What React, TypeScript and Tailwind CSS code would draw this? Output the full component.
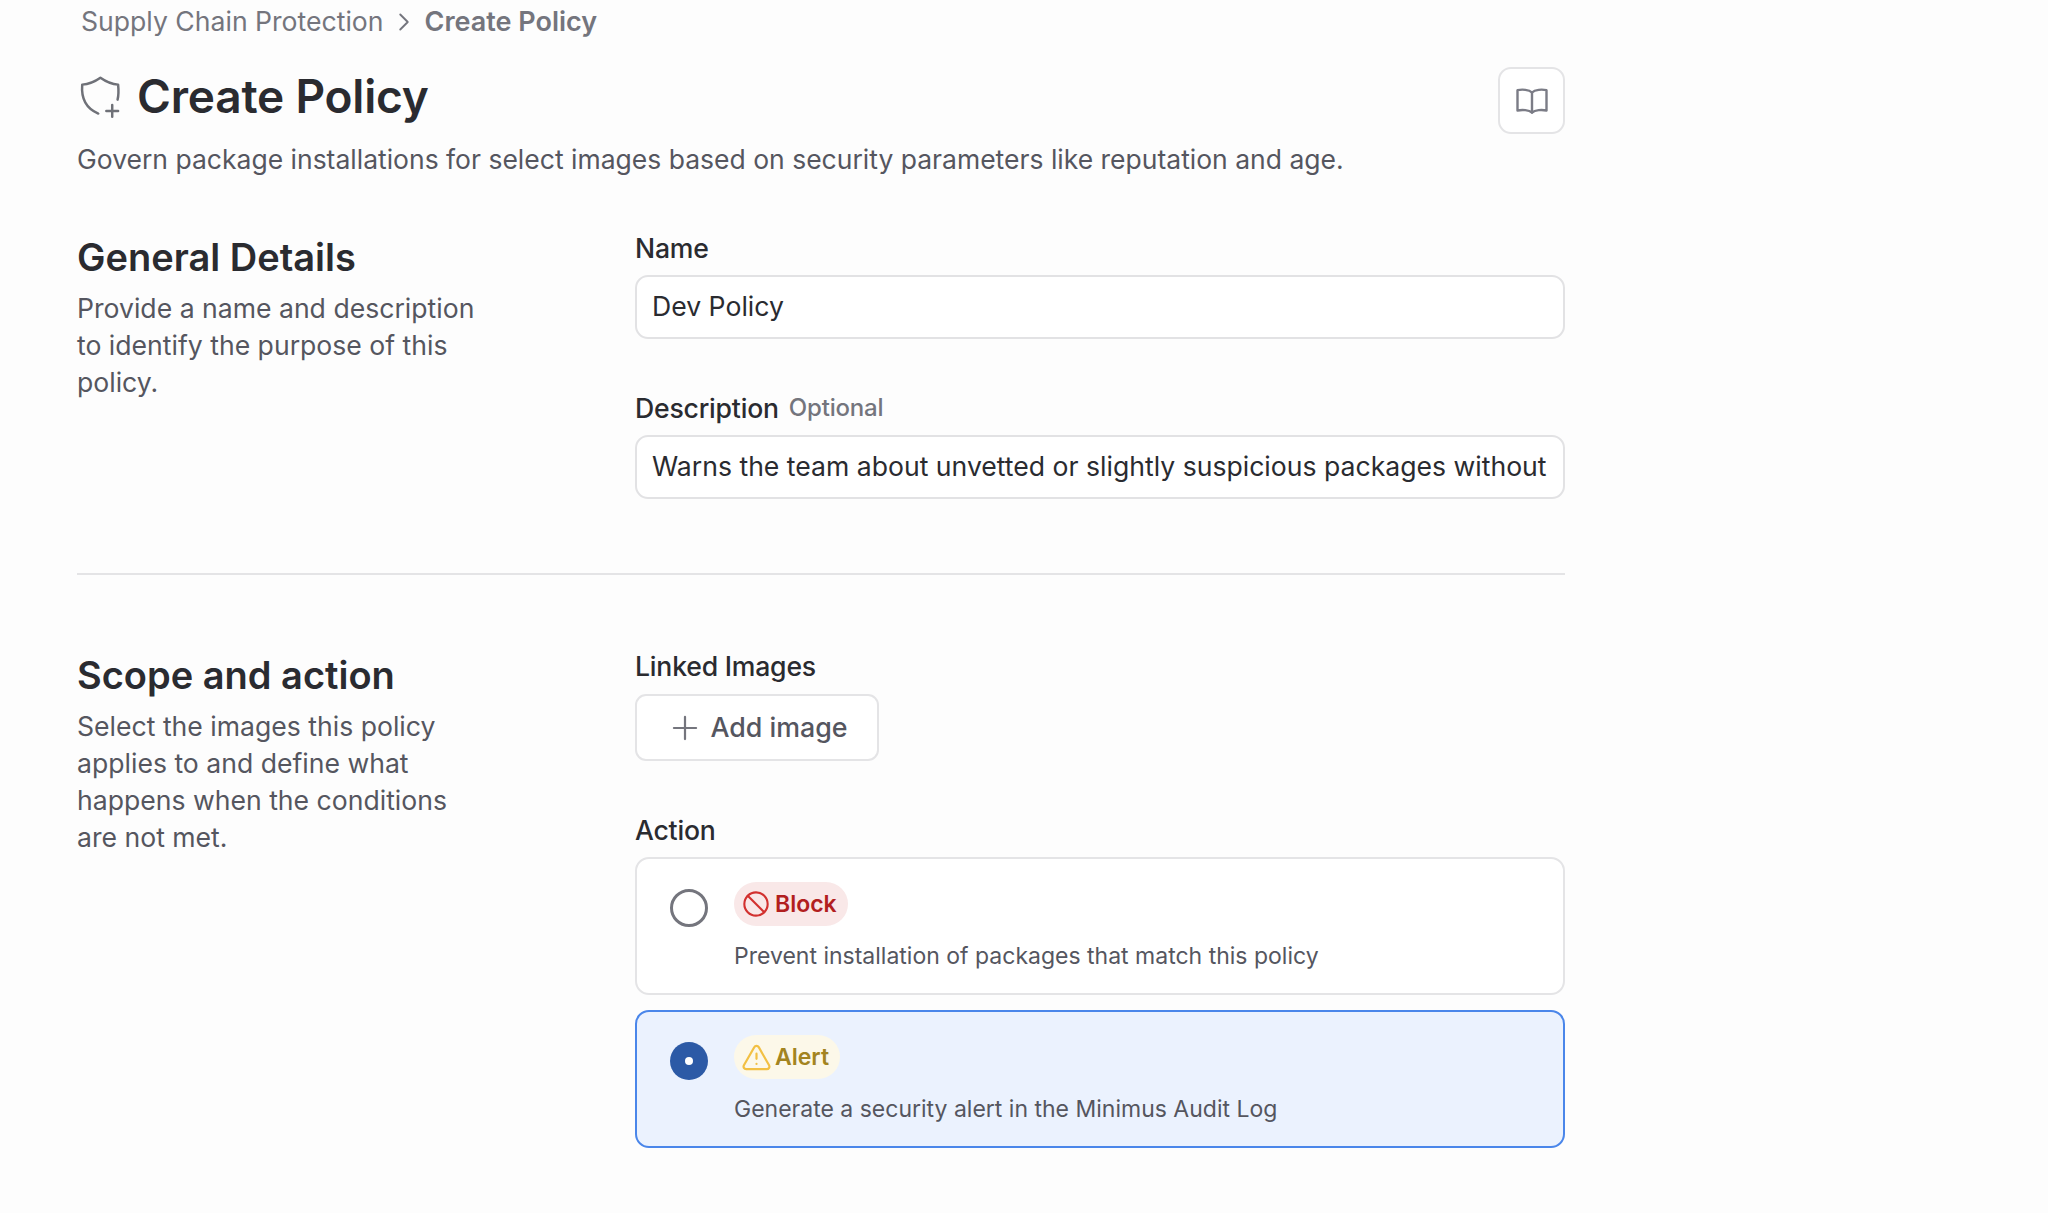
import React from "react";
import { Ban, ChevronRight, Plus, TriangleAlert } from "lucide-react";

const font = "font-['Inter','Liberation_Sans',sans-serif]";

function ShieldPlus() {
  return (
    <svg className="mt-[3px]" width="45" height="43" viewBox="0 0 42 40" fill="none" stroke="#6f7178" strokeWidth="2.3" strokeLinecap="round" strokeLinejoin="round">
      <path d="M36 22 C37 18 37 13 36.5 8 C30 7.5 25 5 20 1.5 C15 5 9.5 7.5 3 8 C2 20 6 30 18 35" />
      <path d="M31 27 V38 M25.5 32.5 H36.5" />
    </svg>
  );
}

function BookIcon() {
  return (
    <svg width="32" height="26" viewBox="0 0 32 26" fill="none" stroke="#7b7c86" strokeWidth="2.4" strokeLinejoin="round" strokeLinecap="round">
      <path d="M16 4.5 C13 1.5 6 1.2 1.5 2.2 V22.5 C6 21.5 13 21.8 16 24.5 C19 21.8 26 21.5 30.5 22.5 V2.2 C26 1.2 19 1.5 16 4.5 Z" />
      <path d="M16 4.5 V24.5" />
    </svg>
  );
}

function Field({ label, optional, value }: { label: string; optional?: boolean; value: string }) {
  return (
    <div>
      <div className="h-[30px] flex items-center gap-[10px] text-[26.6px] leading-[30px] font-medium text-[#2a2b30] tracking-[-0.2px]">
        {label}
        {optional && <span className="text-[24px] font-medium text-[#74757d]">Optional</span>}
      </div>
      <input
        readOnly
        value={value}
        className="mt-[12px] block w-full h-[64px] rounded-[13px] border-2 border-[#e2e2e4] bg-white px-[15px] pb-[2px] text-[26.6px] text-[#2a2b30] outline-none"
      />
    </div>
  );
}

function ActionCard({ selected, badge, text }: { selected?: boolean; badge: React.ReactNode; text: string }) {
  return (
    <div
      className={
        "h-[138px] rounded-[14px] border-2 flex pl-[33px] pt-[23px] " +
        (selected ? "border-[#4a86ea] bg-[#ebf2fe]" : "border-[#e4e4e6] bg-white")
      }
    >
      {selected ? (
        <div className="mt-[7px] w-[38px] h-[38px] rounded-full bg-[#2c5aa6] flex items-center justify-center shrink-0">
          <div className="w-[8px] h-[8px] rounded-full bg-white" />
        </div>
      ) : (
        <div className="mt-[7px] w-[38px] h-[38px] rounded-full border-[3px] border-[#74757d] bg-white shrink-0" />
      )}
      <div className="ml-[26px]">
        {badge}
        <div className="mt-[14px] text-[23px] leading-[32px] text-[#55565f]">{text}</div>
      </div>
    </div>
  );
}

export default function App() {
  return (
    <div className={font + " w-[2048px] h-[1213px] bg-[#fdfdfd] overflow-hidden pl-[77px] text-[#55565f]"}>
      <div className="w-[1488px]">
        <div className="h-[44px] flex items-center text-[26.6px] text-[#74757d] pl-[4px]">
          <span>Supply Chain Protection</span>
          <ChevronRight size={30} strokeWidth={1.5} className="ml-[5px] mr-[6px]" />
          <span className="font-semibold text-[27px]">Create Policy</span>
        </div>

        <div className="mt-[24px] flex items-start justify-between">
          <div className="flex items-center h-[56px] pl-[2px]">
            <ShieldPlus />
            <h1 className="ml-[13px] text-[46px] leading-[56px] font-semibold text-[#2a2b30] tracking-[-0.2px]">Create Policy</h1>
          </div>
          <button className="-mt-[1px] w-[67px] h-[67px] rounded-[13px] border-2 border-[#e4e4e6] bg-white flex items-center justify-center">
            <BookIcon />
          </button>
        </div>

        <p className="mt-[8px] h-[34px] text-[26.5px] leading-[34px] text-[#55565f]">
          Govern package installations for select images based on security parameters like reputation and age.
        </p>

        <div className="mt-[58px] flex h-[339px]">
          <div className="w-[558px] shrink-0">
            <h2 className="mt-[-1px] text-[38px] leading-[48px] font-semibold text-[#2a2b30]">General Details</h2>
            <p className="mt-[9px] w-[400px] text-[26.6px] leading-[37px]">
              Provide a name and description to identify the purpose of this policy.
            </p>
          </div>
          <div className="flex-1 min-w-0 -mt-[1px]">
            <Field label="Name" value="Dev Policy" />
            <div className="mt-[54px]">
              <Field label="Description" optional value="Warns the team about unvetted or slightly suspicious packages without blocking installations." />
            </div>
          </div>
        </div>

        <div className="border-t-2 border-[#e4e4e6]" />

        <div className="mt-[76px] flex">
          <div className="w-[558px] shrink-0">
            <h2 className="text-[38px] leading-[48px] font-semibold text-[#2a2b30]">Scope and action</h2>
            <p className="mt-[9px] w-[400px] text-[26.6px] leading-[37px]">
              Select the images this policy applies to and define what happens when the conditions are not met.
            </p>
          </div>
          <div className="flex-1 min-w-0 mt-[1px]">
            <div className="h-[30px] flex items-center text-[26.6px] font-medium text-[#2a2b30] tracking-[-0.2px]">Linked Images</div>
            <button className="mt-[12px] w-[244px] h-[67px] rounded-[11px] border-2 border-[#e4e4e6] bg-white flex items-center justify-center text-[26.8px] font-medium text-[#55565f]">
              <Plus size={38} strokeWidth={1.4} className="text-[#74757d] mr-[6px]" />
              Add image
            </button>
            <div className="mt-[55px] h-[30px] flex items-center text-[26.6px] font-medium text-[#2a2b30] tracking-[-0.2px]">Action</div>
            <div className="mt-[11px] flex flex-col gap-[15px]">
              <ActionCard
                badge={
                  <div className="inline-flex items-center h-[44px] rounded-full bg-[#f9e8e8] pl-[8px] pr-[11px] gap-[5px] text-[#b21f1f] text-[23px] font-semibold">
                    <Ban size={28} strokeWidth={1.8} className="text-[#d2312f]" />
                    Block
                  </div>
                }
                text="Prevent installation of packages that match this policy"
              />
              <ActionCard
                selected
                badge={
                  <div className="inline-flex items-center h-[44px] rounded-full bg-[#fcf8e9] pl-[7px] pr-[11px] gap-[3px] text-[#a38420] text-[23px] font-semibold">
                    <TriangleAlert size={31} strokeWidth={1.7} className="text-[#f2c043]" />
                    Alert
                  </div>
                }
                text="Generate a security alert in the Minimus Audit Log"
              />
            </div>
          </div>
        </div>
      </div>
    </div>
  );
}
